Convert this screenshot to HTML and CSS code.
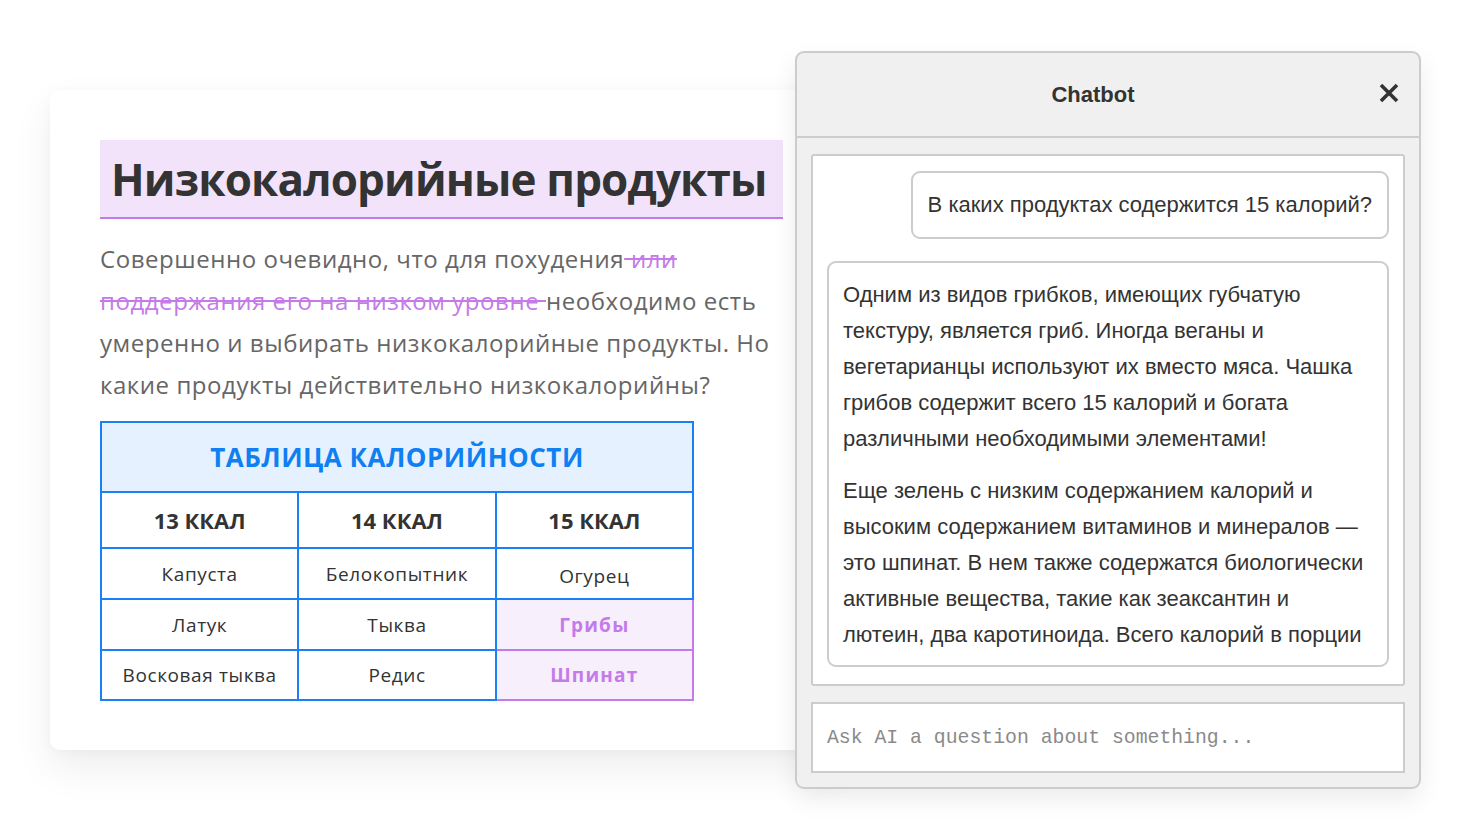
FILE: index.html
```html
<!DOCTYPE html>
<html lang="ru">
<head>
<meta charset="utf-8">
<title>Низкокалорийные продукты</title>
<link rel="stylesheet" href="styles.css">
</head>
<body>
<div class="stage">
  <article class="card">
    <h1 class="title">Низкокалорийные продукты</h1>
    <p class="lead">Совершенно очевидно, что для похудения<s class="strike"> или поддержания его на низком уровне </s>необходимо есть умеренно и выбирать низкокалорийные продукты. Но какие продукты действительно низкокалорийны?</p>
    <table class="cal">
      <tr><th colspan="3" class="cal-title">ТАБЛИЦА КАЛОРИЙНОСТИ</th></tr>
      <tr class="cal-head"><th>13 ККАЛ</th><th>14 ККАЛ</th><th>15 ККАЛ</th></tr>
      <tr><td>Капуста</td><td>Белокопытник</td><td class="low">Огурец</td></tr>
      <tr><td>Латук</td><td>Тыква</td><td class="hl">Грибы</td></tr>
      <tr><td>Восковая тыква</td><td>Редис</td><td class="hl">Шпинат</td></tr>
    </table>
  </article>

  <section class="chat">
    <header class="chat-head">
      <span class="chat-name">Chatbot</span>
      <svg class="chat-close" width="20" height="20" viewBox="0 0 20 20" aria-hidden="true"><path d="M2 2 L18 18 M18 2 L2 18" stroke="#333" stroke-width="3.6" stroke-linecap="butt" fill="none"/></svg>
    </header>
    <div class="chat-body">
      <div class="messages">
        <div class="msg msg-user">В каких продуктах содержится 15 калорий?</div>
        <div class="msg msg-bot">
          <p>Одним из видов грибков, имеющих губчатую текстуру, является гриб. Иногда веганы и вегетарианцы используют их вместо мяса. Чашка грибов содержит всего 15 калорий и богата различными необходимыми элементами!</p>
          <p>Еще зелень с низким содержанием калорий и высоким содержанием витаминов и минералов — это шпинат. В нем также содержатся биологически активные вещества, такие как зеаксантин и лютеин, два каротиноида. Всего калорий в порции</p>
        </div>
      </div>
      <div class="ask">Ask AI a question about something...</div>
    </div>
  </section>
</div>
</body>
</html>
```

FILE: styles.css
```css
* { box-sizing: border-box; }
html, body { margin: 0; padding: 0; background: #fff; }
body { width: 1472px; height: 840px; overflow: hidden; }

.stage { position: relative; width: 1472px; height: 840px; padding: 90px 0 0 50px; }

.card {
  width: 800px;
  height: 660px;
  background: #fff;
  border-radius: 10px;
  box-shadow: 0 18px 40px rgba(0, 0, 0, 0.07), 0 2px 12px rgba(0, 0, 0, 0.03);
  padding: 50px 0 0 50px;
  font-family: "Open Sans", sans-serif;
}

.title {
  margin: 0;
  width: 683px;
  height: 79px;
  background: #f3e3fa;
  border-bottom: 2px solid #c47be9;
  color: #333;
  font-size: 44px;
  font-weight: 700;
  letter-spacing: -0.85px;
  line-height: 79px;
  padding: 0 0 0 11px;
  white-space: nowrap;
}

.lead {
  margin: 19px 0 0 0;
  width: 690px;
  color: #666;
  font-size: 24px;
  letter-spacing: 0.55px;
  line-height: 42px;
}
.strike {
  color: #c47be9;
  text-decoration: line-through;
  text-decoration-color: #c47be9;
  text-decoration-thickness: 2px;
}

.cal {
  margin-top: 15px;
  width: 594px;
  border-collapse: collapse;
  table-layout: fixed;
  color: #333;
  text-align: center;
}
.cal th, .cal td { border: 2px solid #1a80f5; padding: 0; }
.cal-title {
  background: #e5f1fe;
  color: #0f7ff2;
  height: 70px;
  font-size: 26px;
  font-weight: 700;
  letter-spacing: 0.5px;
}
.cal-head th { height: 56px; font-size: 22px; font-weight: 700; }
.cal td { height: 51px; font-size: 19px; letter-spacing: 0.6px; }
.cal tr:last-child td { height: 50px; }
.cal td.low { padding-top: 4px; }
.cal td.hl {
  background: #f8effd;
  border-color: #c47be9;
  color: #c47be9;
  font-weight: 700;
  letter-spacing: 1.2px;
}

.chat {
  position: absolute;
  left: 795px;
  top: 51px;
  width: 626px;
  height: 738px;
  background: #f0f0f0;
  border: 2px solid #ccc;
  border-radius: 9px;
  box-shadow: 0 10px 24px rgba(0, 0, 0, 0.08);
  font-family: "Liberation Sans", Arial, sans-serif;
  color: #333;
  overflow: hidden;
  display: flex;
  flex-direction: column;
}
.chat-head {
  height: 85px;
  border-bottom: 2px solid #ccc;
  display: flex;
  align-items: center;
  justify-content: center;
  position: relative;
  flex: none;
  padding-right: 30px;
}
.chat-name { font-size: 22px; font-weight: 700; color: #333; }
.chat-close { position: absolute; right: 20px; top: 30px; }

.chat-body {
  padding: 16px 14px 14px;
  display: flex;
  flex-direction: column;
  gap: 16px;
  flex: 1;
}
.messages {
  height: 532px;
  background: #fff;
  border: 2px solid #ccc;
  border-radius: 3px;
  padding: 15px 14px;
  display: flex;
  flex-direction: column;
  gap: 22px;
  overflow: hidden;
}
.msg {
  border: 2px solid #ccc;
  border-radius: 9px;
  font-size: 22px;
  line-height: 36px;
  color: #333;
  background: #fff;
  flex: none;
}
.msg-user { align-self: flex-end; padding: 14px 15px; }
.msg-bot { padding: 14px 14px 12px; }
.msg-bot p { margin: 0; }
.msg-bot p + p { margin-top: 16px; }

.ask {
  height: 71px;
  background: #fff;
  border: 2px solid #ccc;
  padding: 0 14px;
  display: flex;
  align-items: center;
  font-family: "Liberation Mono", "Courier New", monospace;
  font-size: 19.8px;
  color: #8a8a8a;
}
```
